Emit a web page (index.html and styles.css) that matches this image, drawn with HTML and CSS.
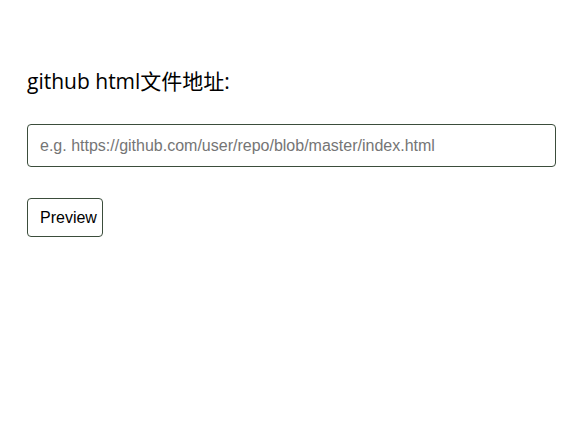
FILE: index.html
```html
<!DOCTYPE html>
<html>
<head>
<meta charset="utf-8">
<link rel="stylesheet" href="styles.css">
</head>
<body>
<div class="page">
  <label class="title" for="url">github html文件地址:</label>
  <input id="url" class="url" type="text" placeholder="e.g. https://github.com/user/repo/blob/master/index.html">
  <div class="actions"><button class="btn">Preview</button></div>
</div>
</body>
</html>
```
FILE: styles.css
```css
html, body { margin: 0; padding: 0; background: #fff; }
.page {
  padding: 69px 29px 0 27px;
  display: flex;
  flex-direction: column;
  font-family: "Open Sans", "Noto Sans CJK SC", sans-serif;
}
.title {
  font-size: 21px;
  line-height: 25px;
  color: #000;
}
.url {
  margin-top: 30px;
  box-sizing: border-box;
  height: 43px;
  width: 529px;
  border: 1px solid #3b4d3b;
  border-radius: 4px;
  padding: 0 12px;
  font-family: "Liberation Sans", Arial, sans-serif;
  font-size: 16px;
  color: #000;
  outline: none;
}
.url::placeholder { color: #757575; }
.actions { margin-top: 31px; display: flex; }
.btn {
  box-sizing: border-box;
  width: 76px;
  height: 39px;
  border: 1px solid #3b4d3b;
  border-radius: 4px;
  background: #fff;
  padding: 0 0 0 12px;
  text-align: left;
  font-family: "Liberation Sans", Arial, sans-serif;
  font-size: 16px;
  color: #000;
}
```
